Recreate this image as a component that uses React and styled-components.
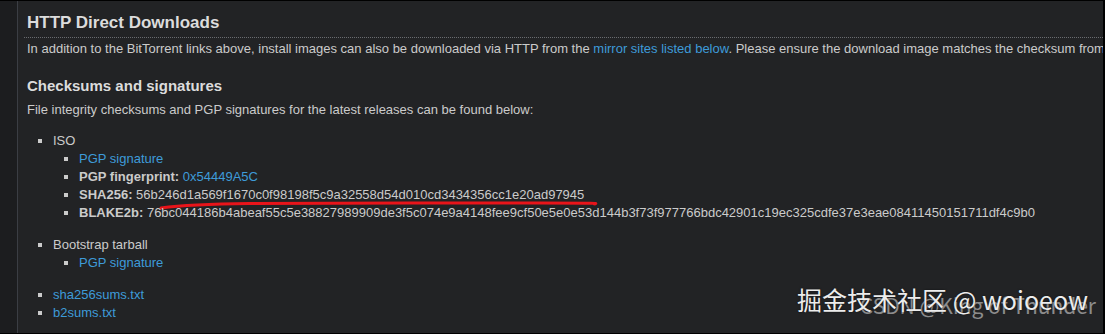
import React from 'react';
import styled, { createGlobalStyle } from 'styled-components';

const GlobalStyle = createGlobalStyle`
  html, body {
    margin: 0;
    padding: 0;
    background: #000;
  }
  body {
    font-family: "Liberation Sans", Arial, sans-serif;
  }
`;

const Frame = styled.div`
  position: relative;
  width: 1105px;
  height: 334px;
  box-sizing: border-box;
  border-top: 1px solid #000;
  border-right: 2px solid #000;
  border-bottom: 1px solid #000;
  display: flex;
  overflow: hidden;
`;

const Gutter = styled.div`
  width: 17px;
  flex: none;
  background: #1c1d1f;
  border-right: 1px solid #3b3e44;
`;

const Content = styled.main`
  flex: 1;
  min-width: 0;
  background: #222325;
  padding: 10px 0 0 9px;
  color: #cbcbcb;
  font-size: 13px;
  line-height: 19px;
  overflow: hidden;
`;

const Heading = styled.h2`
  margin: ${p => p.top || 0}px 0 0 ${p => (p.dotted ? '-3px' : '0')};
  padding: 0 0 2px ${p => (p.dotted ? '3px' : '0')};
  font-size: ${p => p.size || 17}px;
  line-height: 24px;
  font-weight: bold;
  color: #dcdcdc;
  border-bottom: ${p => (p.dotted ? '1px dotted #6a6c70' : 'none')};
`;

const Para = styled.p`
  margin: ${p => p.margin || '1px 0 0 0'};
  white-space: nowrap;
`;

const Link = styled.a`
  color: #3e9bd9;
  text-decoration: none;
`;

const List = styled.ul`
  margin: ${p => p.margin || '0'};
  padding-left: 26px;
  list-style: square;
  line-height: 18px;
  white-space: nowrap;

  li::marker {
    color: #cbcbcb;
    font-size: 13px;
  }
`;

const Item = styled.li`
  position: relative;
  margin-top: ${p => p.gap || 0}px;
`;

const Label = styled.strong`
  font-weight: bold;
`;

const Scribble = styled.svg`
  position: absolute;
  left: 80px;
  top: 13px;
  pointer-events: none;
`;

const Watermark = styled.div`
  position: absolute;
  right: ${p => p.right}px;
  bottom: ${p => p.bottom}px;
  font-family: "Noto Sans CJK SC", "Liberation Sans", sans-serif;
  font-size: ${p => p.size}px;
  line-height: 1;
  color: ${p => p.color};
  white-space: nowrap;
  text-shadow: ${p => p.shadow || 'none'};
`;

const sha256 = '56b246d1a569f1670c0f98198f5c9a32558d54d010cd3434356cc1e20ad97945';
const blake2b =
  '76bc044186b4abeaf55c5e38827989909de3f5c074e9a4148fee9cf50e5e0e53d144b3f73f977766bdc42901c19ec325cdfe37e3eae08411450151711df4c9b0';

export default function App() {
  return (
    <>
      <GlobalStyle />
      <Frame>
        <Gutter />
        <Content>
          <Heading dotted>HTTP Direct Downloads</Heading>
          <Para>
            In addition to the BitTorrent links above, install images can also be downloaded via HTTP from the{' '}
            <Link href="#">mirror sites listed below</Link>. Please ensure the download image matches the checksum
            from the
          </Para>

          <Heading size={15} top={16}>Checksums and signatures</Heading>
          <Para margin="0">File integrity checksums and PGP signatures for the latest releases can be found below:</Para>

          <List margin="13px 0 0 0">
            <Item>
              ISO
              <List>
                <Item><Link href="#">PGP signature</Link></Item>
                <Item>
                  <Label>PGP fingerprint:</Label> <Link href="#">0x54449A5C</Link>
                </Item>
                <Item>
                  <Label>SHA256:</Label> {sha256}
                  <Scribble width="470" height="12" viewBox="0 0 470 12">
                    <path
                      d="M2 9 C 25 6, 50 5, 90 4.5 S 300 4, 380 4 S 430 4.5, 436 5"
                      fill="none"
                      stroke="#e8141a"
                      strokeWidth="3"
                      strokeLinecap="round"
                    />
                  </Scribble>
                </Item>
                <Item>
                  <Label>BLAKE2b:</Label> {blake2b}
                </Item>
              </List>
            </Item>
            <Item gap={14}>
              Bootstrap tarball
              <List>
                <Item><Link href="#">PGP signature</Link></Item>
              </List>
            </Item>
          </List>

          <List margin="14px 0 0 0">
            <Item><Link href="#">sha256sums.txt</Link></Item>
            <Item><Link href="#">b2sums.txt</Link></Item>
          </List>
        </Content>

        <Watermark right={7} bottom={17} size={21} color="#8c8c8c">CSDN @King of Thunder</Watermark>
        <Watermark right={15} bottom={21} size={25} color="#ececec" shadow="0 0 2px rgba(0,0,0,0.6)">
          掘金技术社区 @ woioeow
        </Watermark>
      </Frame>
    </>
  );
}
